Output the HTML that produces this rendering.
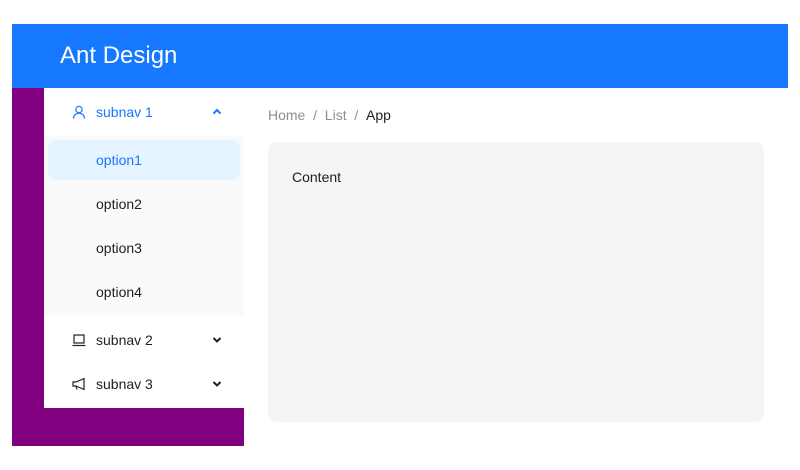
<!DOCTYPE html>
<html><head><style>
*{margin:0;padding:0;box-sizing:border-box}
body{width:800px;height:470px;background:#fff;font-family:"Liberation Sans",sans-serif;font-size:14px;position:relative;overflow:hidden;color:rgba(0,0,0,.88)}
.hdr{position:absolute;left:12px;top:24px;width:776px;height:64px;background:#1677ff}
.hdr span{position:absolute;left:48px;top:18px;color:#fff;font-size:24px}
.sider{position:absolute;left:12px;top:88px;width:232px;height:358px;background:#800080}
.menu{position:absolute;left:44px;top:88px;width:200px;height:320px;background:#fff}
.row{position:absolute;left:0;width:200px;height:44px;line-height:44px}
.row .t{position:absolute;left:52px}
.row svg.i{position:absolute;left:28px;top:15px}
.row svg.c{position:absolute;left:167px;top:17px}
.sub{position:absolute;left:0;top:48px;width:200px;height:180px;background:#fafafa}
.sel{position:absolute;left:4px;top:4px;width:192px;height:40px;background:#e6f4ff;border-radius:8px}
.bc{position:absolute;left:268px;top:107px;color:rgba(0,0,0,.45)}
.bc b{font-weight:normal;color:rgba(0,0,0,.88)}
.content{position:absolute;left:268px;top:142px;width:496px;height:280px;background:#f5f5f5;border-radius:8px}
.content span{position:absolute;left:24px;top:27px}
</style></head><body>
<div class="hdr"><span>Ant Design</span></div>
<div class="sider"></div>
<div class="menu">
 <div class="row" style="top:2px;color:#1677ff">
  <svg class="i" width="14" height="14" viewBox="0 0 14 14" fill="none" stroke="#1677ff" stroke-width="1.2"><circle cx="7" cy="4.5" r="3.2"/><path d="M1.5 13.5c0-3 2.5-5.3 5.5-5.3s5.5 2.3 5.5 5.3"/></svg>
  <span class="t">subnav 1</span>
  <svg class="c" width="12" height="10" viewBox="0 0 12 10"><path d="M2.5 6.5L6 3L9.5 6.5" fill="none" stroke="#1677ff" stroke-width="2"/></svg>
 </div>
 <div class="sub">
  <div class="sel"></div>
  <div class="row" style="top:2px;color:#1677ff"><span class="t">option1</span></div>
  <div class="row" style="top:46px"><span class="t">option2</span></div>
  <div class="row" style="top:90px"><span class="t">option3</span></div>
  <div class="row" style="top:134px"><span class="t">option4</span></div>
 </div>
 <div class="row" style="top:230px">
  <svg class="i" width="14" height="14" viewBox="0 0 14 14" fill="none" stroke="#222" stroke-width="1.2"><rect x="2" y="2" width="10" height="8"/><path d="M0.5 12.5h13"/></svg>
  <span class="t">subnav 2</span>
  <svg class="c" width="12" height="10" viewBox="0 0 12 10"><path d="M2.5 3L6 6.5L9.5 3" fill="none" stroke="#222" stroke-width="2"/></svg>
 </div>
 <div class="row" style="top:274px">
  <svg class="i" width="14" height="14" viewBox="0 0 14 14" fill="none" stroke="#222" stroke-width="1.2"><path d="M1 5h3l8-3.5v11L4 9H1z"/><path d="M4 9l1 3.5"/></svg>
  <span class="t">subnav 3</span>
  <svg class="c" width="12" height="10" viewBox="0 0 12 10"><path d="M2.5 3L6 6.5L9.5 3" fill="none" stroke="#222" stroke-width="2"/></svg>
 </div>
</div>
<div class="bc">Home&nbsp;&nbsp;/&nbsp;&nbsp;List&nbsp;&nbsp;/&nbsp;&nbsp;<b>App</b></div>
<div class="content"><span>Content</span></div>
</body></html>
